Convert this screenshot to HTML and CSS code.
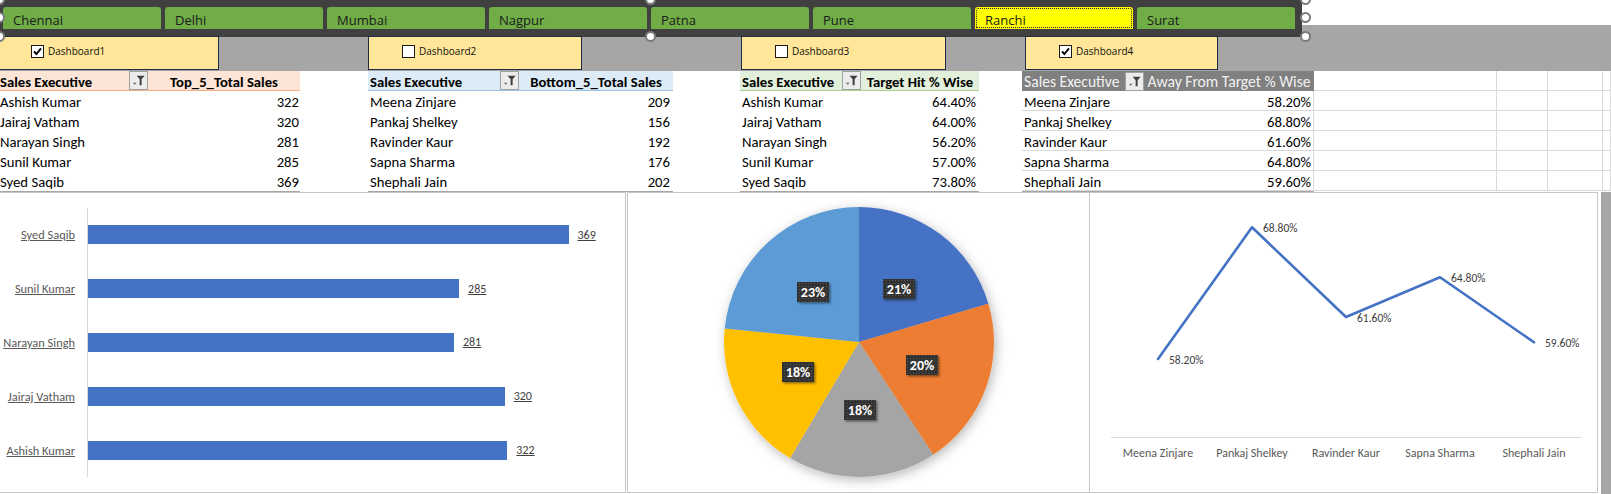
FILE: index.html
```html
<!DOCTYPE html>
<html lang="en">
<head>
<meta charset="utf-8">
<title>Sales Dashboard</title>
<link rel="stylesheet" href="styles.css">
</head>
<body>
<div class="sheet">
  <div class="top">
    <div class="slicer">
      <div class="tab">Chennai</div>
      <div class="tab">Delhi</div>
      <div class="tab">Mumbai</div>
      <div class="tab">Nagpur</div>
      <div class="tab">Patna</div>
      <div class="tab">Pune</div>
      <div class="tab tab-active">Ranchi</div>
      <div class="tab">Surat</div>
    </div>
    <div class="dash-row">
      <div class="dash dash1">
        <svg class="cb" viewBox="0 0 13 13"><rect x="0.5" y="0.5" width="12" height="12" fill="#fff" stroke="#1a1a1a"/><path d="M3 6.3 L5.4 9 L10 3.4" fill="none" stroke="#000" stroke-width="1.9"/></svg>
        <span>Dashboard1</span>
      </div>
      <div class="dash dash2">
        <svg class="cb" viewBox="0 0 13 13"><rect x="0.5" y="0.5" width="12" height="12" fill="#fff" stroke="#1a1a1a"/></svg>
        <span>Dashboard2</span>
      </div>
      <div class="dash dash3">
        <svg class="cb" viewBox="0 0 13 13"><rect x="0.5" y="0.5" width="12" height="12" fill="#fff" stroke="#1a1a1a"/></svg>
        <span>Dashboard3</span>
      </div>
      <div class="dash dash4">
        <svg class="cb" viewBox="0 0 13 13"><rect x="0.5" y="0.5" width="12" height="12" fill="#fff" stroke="#1a1a1a"/><path d="M3 6.3 L5.4 9 L10 3.4" fill="none" stroke="#000" stroke-width="1.9"/></svg>
        <span>Dashboard4</span>
      </div>
    </div>
    <span class="handle hd-l0"></span>
    <span class="handle hd-m0"></span>
    <span class="handle hd-r0"></span>
    <span class="handle hd-l1"></span>
    <span class="handle hd-r1"></span>
    <span class="handle hd-l2"></span>
    <span class="handle hd-m2"></span>
    <span class="handle hd-r2"></span>
  </div>

  <div class="tables">
    <div class="tbl tbl1">
      <div class="th th-name"><span class="th-text">Sales Executive</span><span class="fbtn"><svg viewBox="0 0 18 18"><path d="M7 4 H15.5 L12.3 7.6 V14 H10.2 V7.6 Z" fill="#3f3f3f"/><path d="M3 11.5 H7 L5 13.5 Z" fill="#6a6a6a"/></svg></span></div>
      <div class="th th-val"><span class="th-text">Top_5_Total Sales</span></div>
      <div class="td">Ashish Kumar</div><div class="td num">322</div>
      <div class="td">Jairaj Vatham</div><div class="td num">320</div>
      <div class="td">Narayan Singh</div><div class="td num">281</div>
      <div class="td">Sunil Kumar</div><div class="td num">285</div>
      <div class="td">Syed Saqib</div><div class="td num">369</div>
    </div>
    <div class="tbl tbl2">
      <div class="th th-name"><span class="th-text">Sales Executive</span><span class="fbtn"><svg viewBox="0 0 18 18"><path d="M7 4 H15.5 L12.3 7.6 V14 H10.2 V7.6 Z" fill="#3f3f3f"/><path d="M3 11.5 H7 L5 13.5 Z" fill="#6a6a6a"/></svg></span></div>
      <div class="th th-val"><span class="th-text">Bottom_5_Total Sales</span></div>
      <div class="td">Meena Zinjare</div><div class="td num">209</div>
      <div class="td">Pankaj Shelkey</div><div class="td num">156</div>
      <div class="td">Ravinder Kaur</div><div class="td num">192</div>
      <div class="td">Sapna Sharma</div><div class="td num">176</div>
      <div class="td">Shephali Jain</div><div class="td num">202</div>
    </div>
    <div class="tbl tbl3">
      <div class="th th-name"><span class="th-text">Sales Executive</span><span class="fbtn"><svg viewBox="0 0 18 18"><path d="M7 4 H15.5 L12.3 7.6 V14 H10.2 V7.6 Z" fill="#3f3f3f"/><path d="M3 11.5 H7 L5 13.5 Z" fill="#6a6a6a"/></svg></span></div>
      <div class="th th-val"><span class="th-text">Target Hit % Wise</span></div>
      <div class="td">Ashish Kumar</div><div class="td num">64.40%</div>
      <div class="td">Jairaj Vatham</div><div class="td num">64.00%</div>
      <div class="td">Narayan Singh</div><div class="td num">56.20%</div>
      <div class="td">Sunil Kumar</div><div class="td num">57.00%</div>
      <div class="td">Syed Saqib</div><div class="td num">73.80%</div>
    </div>
    <div class="tbl tbl4">
      <div class="th th-name"><span class="th-text">Sales Executive</span><span class="fbtn"><svg viewBox="0 0 18 18"><path d="M7 4 H15.5 L12.3 7.6 V14 H10.2 V7.6 Z" fill="#3f3f3f"/><path d="M3 11.5 H7 L5 13.5 Z" fill="#6a6a6a"/></svg></span></div>
      <div class="th th-val"><span class="th-text">Away From Target % Wise</span></div>
      <div class="td">Meena Zinjare</div><div class="td num">58.20%</div>
      <div class="td">Pankaj Shelkey</div><div class="td num">68.80%</div>
      <div class="td">Ravinder Kaur</div><div class="td num">61.60%</div>
      <div class="td">Sapna Sharma</div><div class="td num">64.80%</div>
      <div class="td">Shephali Jain</div><div class="td num">59.60%</div>
    </div>
    <div class="grid-fill">
      <div></div><div></div><div></div><div></div>
      <div></div><div></div><div></div><div></div>
      <div></div><div></div><div></div><div></div>
      <div></div><div></div><div></div><div></div>
      <div></div><div></div><div></div><div></div>
      <div></div><div></div><div></div><div></div>
    </div>
  </div>

  <div class="charts">
    <div class="chart chart-bar">
      <div class="bar-plot">
        <div class="bar-row"><span class="bar-label">Syed Saqib</span><div class="bar-track"><div class="bar" style="width:480.5px"></div><span class="bar-val">369</span></div></div>
        <div class="bar-row"><span class="bar-label">Sunil Kumar</span><div class="bar-track"><div class="bar" style="width:371.1px"></div><span class="bar-val">285</span></div></div>
        <div class="bar-row"><span class="bar-label">Narayan Singh</span><div class="bar-track"><div class="bar" style="width:365.9px"></div><span class="bar-val">281</span></div></div>
        <div class="bar-row"><span class="bar-label">Jairaj Vatham</span><div class="bar-track"><div class="bar" style="width:416.7px"></div><span class="bar-val">320</span></div></div>
        <div class="bar-row"><span class="bar-label">Ashish Kumar</span><div class="bar-track"><div class="bar" style="width:419.3px"></div><span class="bar-val">322</span></div></div>
      </div>
    </div>

    <div class="chart chart-pie">
      <svg class="chart-svg" viewBox="0 0 461 299" width="461" height="299">
        <defs>
          <filter id="pieShadow" x="-20%" y="-20%" width="140%" height="140%">
            <feDropShadow dx="2" dy="3" stdDeviation="6" flood-color="#000" flood-opacity="0.28"/>
          </filter>
          <filter id="lblShadow" x="-30%" y="-30%" width="160%" height="160%">
            <feDropShadow dx="1.5" dy="1.5" stdDeviation="1.2" flood-color="#000" flood-opacity="0.45"/>
          </filter>
          <pattern id="dots" width="3" height="3" patternUnits="userSpaceOnUse">
            <rect width="3" height="3" fill="#333"/>
            <rect width="1" height="1" fill="#555"/>
          </pattern>
        </defs>
        <g filter="url(#pieShadow)">
          <path d="M231,149 L231,14 A135,135 0 0 1 360.4,110.7 Z" fill="#4472c4"/>
          <path d="M231,149 L360.4,110.7 A135,135 0 0 1 305.3,261.7 Z" fill="#ed7d31"/>
          <path d="M231,149 L305.3,261.7 A135,135 0 0 1 162.1,265.1 Z" fill="#a5a5a5"/>
          <path d="M231,149 L162.1,265.1 A135,135 0 0 1 96.7,135.4 Z" fill="#ffc000"/>
          <path d="M231,149 L96.7,135.4 A135,135 0 0 1 231,14 Z" fill="#5b9bd5"/>
        </g>
        <g class="pie-lbl">
          <rect x="255" y="86" width="32" height="20" fill="url(#dots)" filter="url(#lblShadow)"/>
          <text x="271" y="96.5">21%</text>
          <rect x="278" y="162" width="32" height="20" fill="url(#dots)" filter="url(#lblShadow)"/>
          <text x="294" y="172.5">20%</text>
          <rect x="216" y="207" width="32" height="20" fill="url(#dots)" filter="url(#lblShadow)"/>
          <text x="232" y="217.5">18%</text>
          <rect x="154" y="169" width="32" height="20" fill="url(#dots)" filter="url(#lblShadow)"/>
          <text x="170" y="179.5">18%</text>
          <rect x="169" y="89" width="32" height="20" fill="url(#dots)" filter="url(#lblShadow)"/>
          <text x="185" y="99.5">23%</text>
        </g>
      </svg>
    </div>

    <div class="chart chart-line">
      <svg class="chart-svg" viewBox="0 0 506 299" width="506" height="299">
        <line x1="21" y1="244.5" x2="491.5" y2="244.5" stroke="#d9d9d9" stroke-width="1"/>
        <polyline points="68,166 162,34.3 256,124 350,84.3 444,149.3" fill="none" stroke="#4472c4" stroke-width="2.6" stroke-linejoin="round" stroke-linecap="round"/>
        <g class="line-val">
          <text x="79" y="167">58.20%</text>
          <text x="173" y="35.3">68.80%</text>
          <text x="267" y="125">61.60%</text>
          <text x="361" y="85.3">64.80%</text>
          <text x="455" y="150.3">59.60%</text>
        </g>
        <g class="line-cat">
          <text x="68" y="260">Meena Zinjare</text>
          <text x="162" y="260">Pankaj Shelkey</text>
          <text x="256" y="260">Ravinder Kaur</text>
          <text x="350" y="260">Sapna Sharma</text>
          <text x="444" y="260">Shephali Jain</text>
        </g>
      </svg>
    </div>
    <div class="side-strip"></div>
  </div>
</div>
</body>
</html>
```

FILE: styles.css
```css
html, body {
  margin: 0;
  padding: 0;
}

body {
  width: 1611px;
  height: 494px;
  overflow: hidden;
  background: #ffffff;
  font-family: Carlito, Lato, "Liberation Sans", sans-serif;
  color: #000;
}

.sheet {
  width: 1611px;
  height: 494px;
}

/* ---------- top: slicer + dashboard buttons ---------- */
.top {
  position: relative;
  height: 71px;
  background: linear-gradient(#ffffff 0 25px, #a6a6a6 25px 71px);
}

.slicer {
  width: 1302px;
  height: 37px;
  box-sizing: border-box;
  padding: 7px 0 0 3px;
  background: #404040;
  display: flex;
  gap: 4px;
}

.tab {
  width: 158px;
  height: 22px;
  box-sizing: border-box;
  padding: 2px 0 0 10px;
  background: #70ad47;
  border-radius: 3px 3px 0 0;
  font: 13px/22px "Open Sans", "Noto Sans", sans-serif;
  color: #1b1b1b;
  overflow: visible;
}

.tab-active {
  background: #ffff00;
  outline: 1px dotted #2a2a2a;
  outline-offset: -2px;
}

.dash-row {
  display: flex;
  height: 34px;
}

.dash {
  box-sizing: border-box;
  height: 34px;
  margin-top: -1px;
  background: #ffe699;
  border: 1px solid #1f2a44;
  display: flex;
  align-items: center;
  padding: 0 0 4px 33px;
  font: 10px "Open Sans", "Noto Sans", sans-serif;
  color: #111;
}

.dash1 { margin-left: -3px; width: 222px; }
.dash2 { margin-left: 149px; width: 214px; }
.dash3 { margin-left: 159px; width: 205px; }
.dash4 { margin-left: 79px; width: 193px; }

.cb {
  width: 13px;
  height: 13px;
  margin-right: 4px;
  flex: none;
}

.handle {
  position: absolute;
  width: 11px;
  height: 11px;
  box-sizing: border-box;
  border-radius: 50%;
  background: #ffffff;
  border: 2px solid #7a7a7a;
}

.hd-l0 { left: -6px; top: -6px; }
.hd-m0 { left: 645px; top: -6px; }
.hd-r0 { left: 1300px; top: -6px; }
.hd-l1 { left: -6px; top: 12px; }
.hd-r1 { left: 1300px; top: 12px; }
.hd-l2 { left: -6px; top: 31px; }
.hd-m2 { left: 645px; top: 31px; }
.hd-r2 { left: 1300px; top: 31px; }

/* ---------- tables ---------- */
.tables {
  display: flex;
  height: 121px;
}

.tbl {
  display: grid;
  grid-auto-rows: 20px;
  align-content: start;
  height: 121px;
  box-sizing: border-box;
  border-bottom: 1px solid #a6a6a6;
  font-size: 14.7px;
}

.tbl1 { width: 300px; grid-template-columns: 148px 152px; }
.tbl2 { margin-left: 68px; width: 305px; grid-template-columns: 151px 154px; }
.tbl3 { margin-left: 67px; width: 239px; grid-template-columns: 121px 118px; }
.tbl4 { margin-left: 43px; width: 292px; grid-template-columns: 122px 170px; border-right: 1px solid #d9d9d9; }

.th {
  box-sizing: border-box;
  height: 20px;
  font-weight: 700;
  white-space: nowrap;
  display: flex;
  align-items: center;
}

.th-text {
  line-height: 20px;
  padding-top: 2px;
  overflow: visible;
}

.th-name {
  justify-content: space-between;
  padding-left: 2px;
}

.th-val {
  justify-content: center;
}

.td {
  box-sizing: border-box;
  height: 20px;
  line-height: 19px;
  padding: 2px 3px 0 2px;
  white-space: nowrap;
}

.num {
  text-align: right;
}

.fbtn {
  width: 19px;
  height: 19px;
  box-sizing: border-box;
  background: #ececec;
  border: 1px solid #a0a0a0;
  display: flex;
  flex: none;
}

.fbtn svg {
  width: 17px;
  height: 17px;
}

.tbl1 .th { background: #fce4d6; border-bottom: 1px solid #f4b084; }
.tbl1 .th-name { padding-left: 0; }
.tbl1 .td { padding: 2px 1px 0 0; }

.tbl2 .th { background: #ddebf7; border-bottom: 1px solid #9bc2e6; }
.tbl3 .th { background: #e2efda; border-bottom: 1px solid #a9d08e; }

.tbl4 .th {
  background: #808080;
  color: #f2f2f2;
  font-weight: 400;
}
.tbl4 .th-text { font-size: 15.6px; }
.tbl4 .td { border-bottom: 1px solid #d9d9d9; }

.grid-fill {
  flex: 1;
  display: grid;
  grid-template-columns: 183px 51px 55px 1fr;
  grid-auto-rows: 20px;
  align-content: start;
}

.grid-fill div {
  border-right: 1px solid #d9d9d9;
  border-bottom: 1px solid #d9d9d9;
}

/* ---------- charts ---------- */
.charts {
  display: flex;
  height: 302px;
}

.chart {
  box-sizing: border-box;
  height: 301px;
  background: #fff;
  border: 1px solid #c6c6c6;
}

.chart-bar {
  width: 626px;
  border-left: none;
}

.chart-pie {
  margin-left: 1px;
  width: 463px;
}

.chart-line {
  width: 508px;
  border-left: none;
}

.chart-svg {
  display: block;
}

.side-strip {
  flex: 1;
  margin-left: 3px;
  background: #a6a6a6;
}

/* bar chart */
.bar-plot {
  margin-top: 15px;
  height: 269px;
  display: flex;
  flex-direction: column;
}

.bar-row {
  flex: 1;
  display: flex;
}

.bar-label {
  width: 87px;
  flex: none;
  box-sizing: border-box;
  padding-right: 12px;
  text-align: right;
  align-self: center;
  font-size: 12.4px;
  color: #595959;
  text-decoration: underline;
  white-space: nowrap;
}

.bar-track {
  flex: 1;
  border-left: 1px solid #d9d9d9;
  display: flex;
  align-items: center;
}

.bar {
  height: 19px;
  background: #4472c4;
  flex: none;
}

.bar-val {
  margin-left: 9px;
  font-size: 12px;
  color: #404040;
  text-decoration: underline;
}

/* pie labels */
.pie-lbl text {
  font-family: Carlito, Lato, sans-serif;
  font-weight: 700;
  font-size: 14px;
  fill: #ffffff;
  text-anchor: middle;
  dominant-baseline: central;
}

/* line chart */
.line-val text {
  font-family: Carlito, Lato, sans-serif;
  font-size: 11.5px;
  fill: #404040;
  dominant-baseline: central;
}

.line-cat text {
  font-family: Carlito, Lato, sans-serif;
  font-size: 12px;
  fill: #595959;
  text-anchor: middle;
  dominant-baseline: central;
}
```
